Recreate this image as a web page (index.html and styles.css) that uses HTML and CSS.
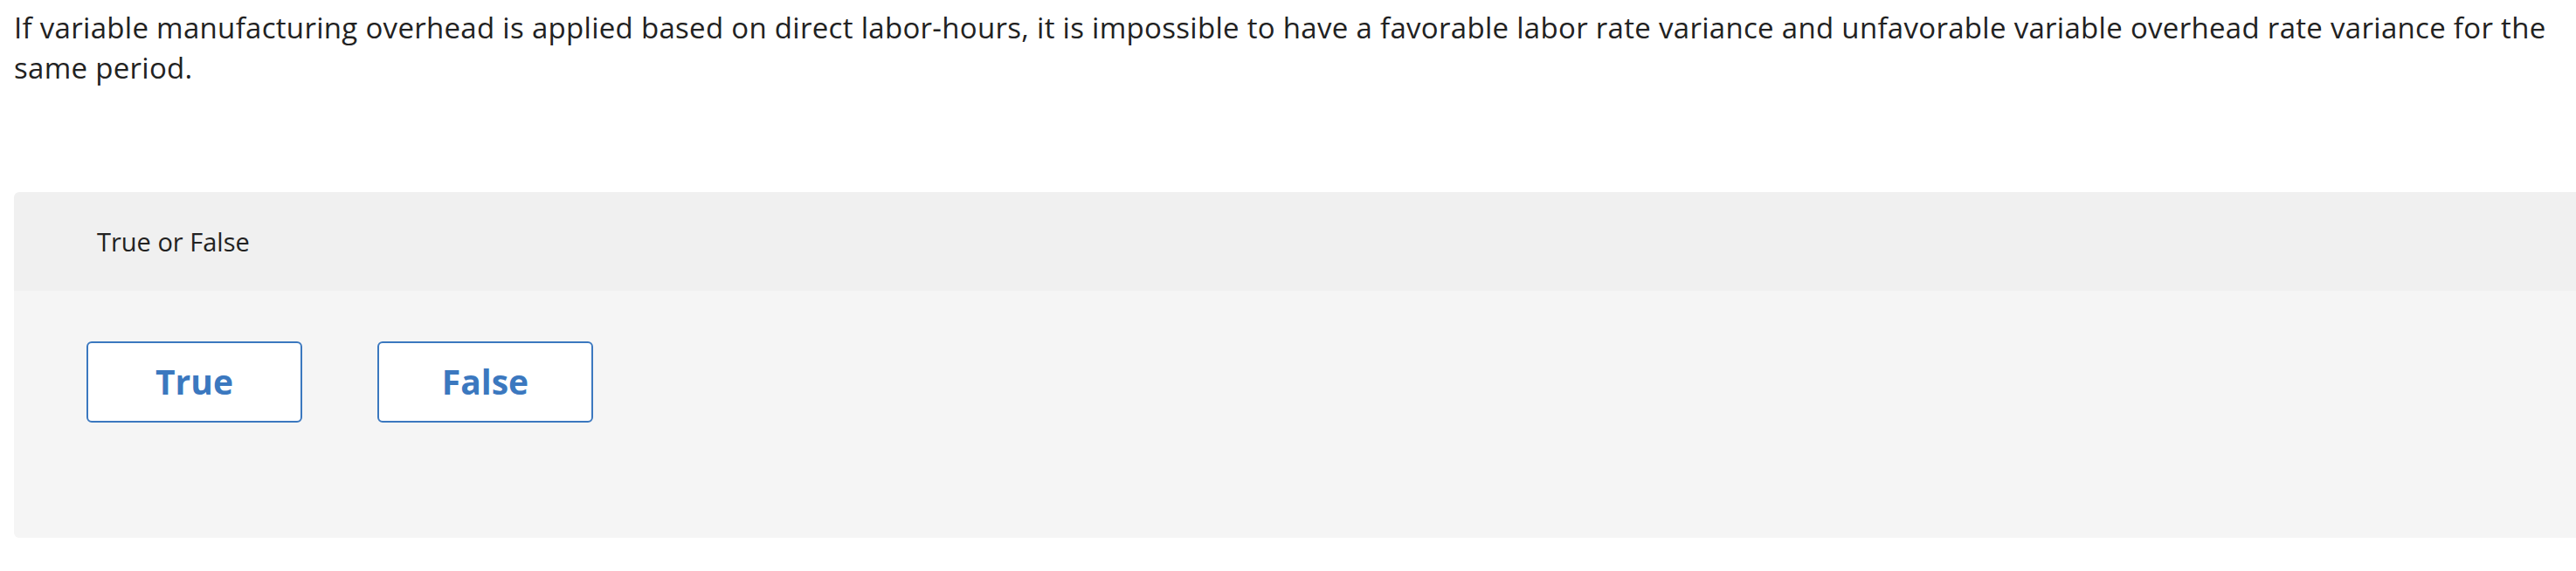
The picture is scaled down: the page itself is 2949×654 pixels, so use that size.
FILE: index.html
```html
<!DOCTYPE html>
<html lang="en">
    <head>
        <meta charset="UTF-8">
        <title>True or False</title>
        <link rel="stylesheet" href="styles.css">
    </head>
<body>

<div class="question">
    <p class="prompt">If variable manufacturing overhead is applied based on direct labor-hours, it is impossible to have a favorable labor rate variance and unfavorable variable overhead rate variance for the same period.</p>

    <div class="answer-panel">
        <div class="answer-header">True or False</div>
        <div class="answer-choices">
            <button type="button" class="choice">True</button>
            <button type="button" class="choice">False</button>
        </div>
    </div>
</div>

</body>
</html>
```

FILE: styles.css
```css
body {
    margin: 0;
    font-family: "Open Sans", Arial, sans-serif;
    color: #222;
    background: #fff;
}
.question {
    padding: 9px 0 0 16px;
}
.prompt {
    margin: 0 24px 0 0;
    font-size: 33px;
    line-height: 46px;
    letter-spacing: 0.3px;
    color: #222;
}
.answer-panel {
    margin-top: 119px;
    border-radius: 6px 0 0 6px;
    overflow: hidden;
}
.answer-header {
    display: flex;
    align-items: center;
    height: 113px;
    padding-left: 95px;
    background-color: #f0f0f0;
    font-size: 29px;
    color: #222;
}
.answer-choices {
    display: flex;
    gap: 86px;
    height: 283px;
    box-sizing: border-box;
    padding: 58px 0 0 83px;
    background-color: #f5f5f5;
}
.choice {
    width: 247px;
    height: 93px;
    padding: 0 0 3px;
    background-color: #fff;
    border: 2px solid #3b78bf; /* Primary blue */
    border-radius: 6px;
    color: #3b78bf;
    font-family: "Open Sans", Arial, sans-serif;
    font-size: 39px;
    font-weight: 700;
    cursor: pointer;
}
```
